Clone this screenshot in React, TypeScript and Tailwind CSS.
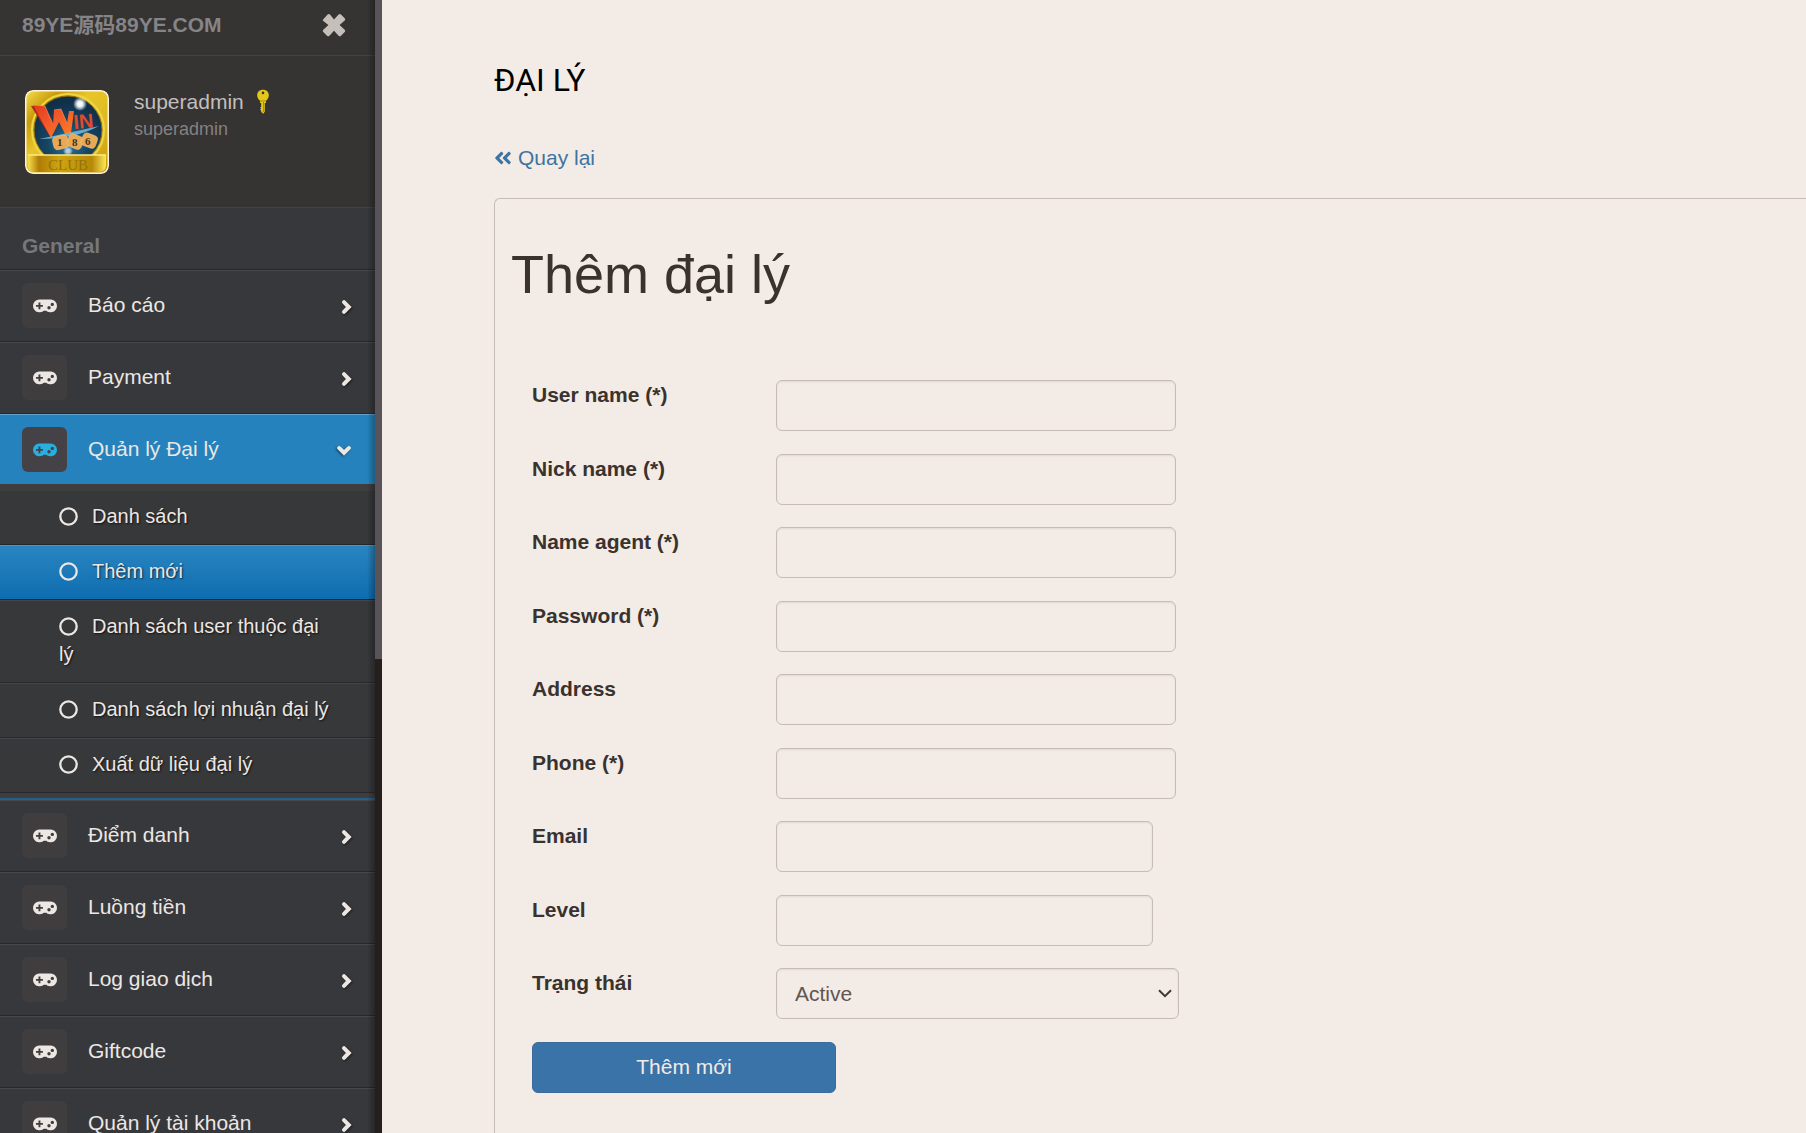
import { useState } from "react";
import clsx from "clsx";
import { FaAngleDoubleLeft } from "react-icons/fa";

type MenuItem = {
  title: string;
  children?: string[];
};

const MENU: MenuItem[] = [
  { title: "Báo cáo" },
  { title: "Payment" },
  {
    title: "Quản lý Đại lý",
    children: [
      "Danh sách",
      "Thêm mới",
      "Danh sách user thuộc đại lý",
      "Danh sách lợi nhuận đại lý",
      "Xuất dữ liệu đại lý",
    ],
  },
  { title: "Điểm danh" },
  { title: "Luồng tiền" },
  { title: "Log giao dịch" },
  { title: "Giftcode" },
  { title: "Quản lý tài khoản" },
];

const FIELDS = [
  { id: "username", label: "User name (*)", type: "text", width: "w-[400px]" },
  { id: "nickname", label: "Nick name (*)", type: "text", width: "w-[400px]" },
  { id: "nameagent", label: "Name agent (*)", type: "text", width: "w-[400px]" },
  { id: "password", label: "Password (*)", type: "password", width: "w-[400px]" },
  { id: "address", label: "Address", type: "text", width: "w-[400px]" },
  { id: "phone", label: "Phone (*)", type: "text", width: "w-[400px]" },
  { id: "email", label: "Email", type: "text", width: "w-[377px]" },
  { id: "level", label: "Level", type: "text", width: "w-[377px]" },
];

const controlStyle =
  "h-[51px] rounded-md border border-[#c5bcb8] bg-transparent px-[18px] text-[21px] text-[#5f5652] shadow-[inset_0_1px_2px_rgba(0,0,0,0.08)] outline-none";

const CloseIcon = () => (
  <svg viewBox="0 0 24 24" className="size-6" fill="currentColor">
    <path d="M1.100 6.500 5.600 1.500q1.200-1.200 2.400 0L12 6.400l4.600-4.900q1.200-1.200 2.400 0l3.700 3.700q1.200 1.200 0 2.400L17.600 12l5.100 4.700q1.200 1.200 0 2.400L19 22.700q-1.200 1.200-2.400 0L12 17.800l-4.600 4.900q-1.200 1.200-2.400 0l-3.700-3.600q-1.200-1.200 0-2.400L6.400 12 1.300 8q-1-.8-.2-1.500z" />
  </svg>
);

const GamepadIcon = () => (
  <svg viewBox="0 0 24 14" className="h-[14px] w-6" fill="currentColor">
    <path
      fillRule="evenodd"
      d="M6.500 .5h11a6.400 6.400 0 1 1-4.200 11.200h-2.600A6.400 6.400 0 1 1 6.500 .5zM5.500 3.400v2.500H3v1.900h2.500v2.500h1.900V7.800h2.500V5.900H7.400V3.400zM16 7.100a1.700 1.700 0 1 0 0 3.400 1.700 1.700 0 0 0 0-3.400zM19.300 3.700a1.700 1.700 0 1 0 0 3.400 1.700 1.700 0 0 0 0-3.400z"
    />
  </svg>
);

const ChevronIcon = ({ open }: { open: boolean }) => (
  <svg
    viewBox="0 0 16 16"
    className={clsx(
      "mt-[3px] size-4 drop-shadow-[1px_1px_1px_rgba(0,0,0,0.5)]",
      open ? "mr-[23px] rotate-90" : "mr-5"
    )}
    fill="none"
    stroke="currentColor"
    strokeWidth="4"
    strokeLinejoin="miter"
    strokeLinecap="round"
  >
    <path d="M5 3.200 9.800 8 5 12.800" />
  </svg>
);

const KeyIcon = () => (
  <svg viewBox="0 0 14 26" className="h-[26px] w-[14px]">
    <path
      fill="#e3c81c"
      fillRule="evenodd"
      d="M7 .8C10.400 .8 12.800 3 12.800 6.200c0 2.400-1.200 4-2.800 5.600v2.200H8.800v8.600L7.400 24.800 5.200 23v-1.400l-1.200-.8 1.200-1.200-1-1 1-1.200V14H4v-2.200C2.400 10.200 1.200 8.600 1.200 6.200 1.200 3 3.600 .8 7 .8zM7 2.600a1.300 1.300 0 1 0 0 2.600 1.300 1.300 0 0 0 0-2.600z"
    />
    <path stroke="#a78d0d" strokeWidth="1" d="M7.500 13v10M4 12h6" />
  </svg>
);

const Avatar = () => (
  <svg viewBox="0 0 84 84" className="size-[84px] rounded-lg">
    <defs>
      <linearGradient id="gold" x1="0" y1="0" x2="1" y2="1">
        <stop offset="0" stopColor="#f3dc4a" />
        <stop offset=".2" stopColor="#c99a0c" />
        <stop offset=".4" stopColor="#e8c62a" />
        <stop offset=".7" stopColor="#dcb820" />
        <stop offset="1" stopColor="#c9980a" />
      </linearGradient>
      <linearGradient id="plate" x1="0" x2="1">
        <stop offset="0" stopColor="#f6e04a" />
        <stop offset=".14" stopColor="#b07c07" />
        <stop offset=".4" stopColor="#cfa40f" />
        <stop offset=".82" stopColor="#b88908" />
        <stop offset="1" stopColor="#fae856" />
      </linearGradient>
      <radialGradient id="night" cx=".5" cy=".7" r=".6">
        <stop offset="0" stopColor="#2a79a8" />
        <stop offset=".5" stopColor="#174563" />
        <stop offset="1" stopColor="#10304a" />
      </radialGradient>
      <radialGradient id="glow">
        <stop offset="0" stopColor="#fff" />
        <stop offset=".4" stopColor="#e7f2f6" />
        <stop offset="1" stopColor="#fff" stopOpacity="0" />
      </radialGradient>
      <linearGradient id="flame" x1="0" y1="0" x2="1" y2="1">
        <stop offset="0" stopColor="#e0391c" />
        <stop offset=".45" stopColor="#f2582a" />
        <stop offset="1" stopColor="#ff8326" />
      </linearGradient>
    </defs>
    <rect width="84" height="84" rx="8" fill="#fdf3dc" />
    <rect x="1.500" y="1.500" width="81" height="81" rx="7" fill="url(#gold)" />
    <circle cx="43" cy="40" r="36" fill="none" stroke="#ecd548" strokeWidth="2" />
    <circle cx="43" cy="40" r="34" fill="url(#night)" stroke="#8f6c09" strokeWidth="1" />
    <circle cx="55" cy="14" r="7" fill="url(#glow)" />
    <path fill="#a82a17" d="M6 16 19 16 29 33 26 48z" />
    <path fill="url(#flame)" d="M8 15 20 16 28 35 29 20 36 19 42 33 44 21 49 21 46 43 40 44 34 32 26 48z" />
    <path fill="none" stroke="#ff9d55" strokeWidth=".6" d="M8 15 20 16 28 35M29 20 36 19 42 33" />
    <text
      x="49"
      y="39"
      fontSize="20"
      fontWeight="700"
      fill="#e5482a"
      fontFamily="Liberation Sans, sans-serif"
      transform="rotate(-5 49 39)"
    >
      IN
    </text>
    <path d="M14 49Q44 43 74 36Q50 49 14 49z" fill="#8bd2f0" opacity=".7" />
    <g fill="#e8a854" stroke="#f2c787" strokeWidth=".6">
      <rect x="28" y="46" width="15" height="13" rx="4" transform="rotate(-14 35 52)" />
      <rect x="43" y="45" width="15" height="13" rx="4" transform="rotate(22 50 51)" />
      <rect x="57" y="44" width="15" height="13" rx="4" transform="rotate(20 64 50)" />
    </g>
    <g fontSize="11" fontWeight="700" fill="#42301c" fontFamily="Liberation Serif, serif">
      <text x="32" y="56">1</text>
      <text x="47" y="56">8</text>
      <text x="60" y="55">6</text>
    </g>
    <circle cx="43" cy="61" r="5" fill="url(#glow)" opacity=".7" />
    <path d="M3 65h78v10q0 7-7 7H10q-7 0-7-7z" fill="url(#plate)" />
    <path d="M3 65h78" stroke="#fbea86" strokeWidth="1.500" />
    <text
      x="43"
      y="80"
      fontSize="15"
      textAnchor="middle"
      fill="#94730a"
      fontFamily="Liberation Serif, serif"
    >
      CLUB
    </text>
  </svg>
);

const SubMenu = ({ items, active }: { items: string[]; active: string }) => (
  <ul className="border-b-2 border-[#265f8a] bg-[#403d3f] pt-[7px] pb-[5px]">
    {items.map((item) => (
      <li key={item}>
        <a
          href="#"
          className={clsx(
            "block border-b pt-[11px] pr-10 pb-[14px] pl-[59px] text-[20px] leading-7",
            item === active
              ? "border-t border-t-[#4d96c4] border-b-[#212428] bg-linear-to-b from-[#2985c0] to-[#0d6db0]"
              : "border-t border-t-[#454649] border-b-[#27282a] bg-[#37383a]",
            item === items[0] && "border-t-0"
          )}
        >
          <svg
            viewBox="0 0 19 19"
            className="mr-[14px] inline size-[19px] align-[-3px]"
            fill="none"
            stroke="currentColor"
            strokeWidth="2.300"
          >
            <circle cx="9.500" cy="9.500" r="8.200" />
          </svg>
          {item}
        </a>
      </li>
    ))}
  </ul>
);

const Sidebar = () => {
  const [opened, setOpened] = useState("Quản lý Đại lý");

  return (
    <aside className="flex h-full w-[382px] shrink-0 overflow-hidden bg-[#261f1d]">
      <div className="relative w-[375px] shrink-0 bg-[#37383b]">
        <div className="bg-[#363333]">
          <div className="flex items-start justify-between border-b border-[#434244] pt-[10px] pr-[29px] pb-[15px] pl-[22px]">
            <a href="#" className="text-[21px] leading-[30px] font-bold text-[#858487]">
              89YE源码89YE.COM
            </a>
            <button type="button" aria-label="Close" className="flex h-[30px] items-center text-[#c6bfb9]">
              <CloseIcon />
            </button>
          </div>
          <div className="flex gap-[25px] border-b border-[#434244] pt-[34px] pb-[33px] pl-[25px]">
            <Avatar />
            <div className="flex flex-col">
              <div className="flex h-6 items-center gap-3 text-[21px] text-[#c1bfbe]">
                superadmin
                <KeyIcon />
              </div>
              <span className="pt-[3px] text-[18px] leading-6 text-[#838182]">superadmin</span>
            </div>
          </div>
        </div>
        <h3 className="border-b border-[#27282a] pt-[23px] pb-2 pl-[22px] text-[21px] leading-[30px] font-bold text-[#76777b]">
          General
        </h3>
        <nav className="text-[#ece7e3] [text-shadow:1px_1px_2px_rgba(0,0,0,0.7)]">
          {MENU.map((item) => {
            const open = item.title === opened;
            return (
              <div key={item.title}>
                <button
                  type="button"
                  onClick={() => setOpened(open ? "" : item.title)}
                  className={clsx(
                    "flex w-full items-center border-t py-3 pl-[22px] text-left text-[21px] leading-[30px]",
                    open
                      ? "border-[#5fa3cd] bg-[#2582bc]"
                      : "border-b border-t-[#48494b] border-b-[#27282a] pb-[13px]"
                  )}
                >
                  <span
                    className={clsx(
                      "mr-[21px] flex size-[45px] items-center justify-center rounded-md",
                      open ? "bg-[#444247] text-[#27afe0]" : "bg-[#403d3f]"
                    )}
                  >
                    <GamepadIcon />
                  </span>
                  <span className="flex-1 pb-[2px]">{item.title}</span>
                  <ChevronIcon open={open} />
                </button>
                {open && item.children && <SubMenu items={item.children} active="Thêm mới" />}
              </div>
            );
          })}
        </nav>
        {/* inner shadow at the right edge */}
        <div className="pointer-events-none absolute inset-y-0 right-0 w-2 bg-linear-to-r from-transparent to-black/30" />
      </div>
      {/* scrollbar thumb */}
      <div className="h-[659px] flex-1 bg-[#59545a]" />
    </aside>
  );
};

const AgentForm = () => (
  <form className="px-[37px]" onSubmit={(e) => e.preventDefault()}>
    {FIELDS.map((field) => (
      <div key={field.id} className="flex items-start odd:mb-[23px] even:mb-[22px]">
        <label htmlFor={field.id} className="w-[244px] leading-[30px] font-bold">
          {field.label}
        </label>
        <input id={field.id} type={field.type} className={clsx(controlStyle, field.width)} />
      </div>
    ))}
    <div className="mb-[23px] flex items-start">
      <label htmlFor="status" className="w-[244px] leading-[30px] font-bold">
        Trạng thái
      </label>
      <div className="relative">
        <select id="status" className={clsx(controlStyle, "w-[403px] appearance-none")}>
          <option>Active</option>
          <option>Inactive</option>
        </select>
        <svg
          viewBox="0 0 14 9"
          className="pointer-events-none absolute top-[21px] right-[7px] h-[9px] w-[14px]"
          fill="none"
          stroke="#3f3833"
          strokeWidth="2"
        >
          <path d="M1 1.200 7 7.200 13 1.200" />
        </svg>
      </div>
    </div>
    <button
      type="submit"
      className="h-[51px] w-[304px] rounded-md border border-[#3a6b9b] bg-[#3a73a8] pb-[2px] text-[#f3ebe5]"
    >
      Thêm mới
    </button>
  </form>
);

const App = () => {
  return (
    <div className="flex h-screen overflow-hidden bg-[#f3ebe5] font-['Liberation_Sans','Noto_Sans_CJK_SC',sans-serif] text-[21px] text-[#3a322d]">
      <Sidebar />
      <main className="flex flex-1 flex-col pt-[60px] pl-28">
        <h2 className="font-[Roboto,sans-serif] text-[32px] leading-10 font-normal text-black">ĐẠI LÝ</h2>
        <a href="#" className="mt-[43px] flex items-center gap-[6px] self-start leading-[30px] text-[#3d73a3]">
          <FaAngleDoubleLeft className="h-5 w-[18px]" />
          Quay lại
        </a>
        <section className="mt-[25px] flex-1 rounded-tl-md border-t border-l border-[#c5bcb8]">
          <h1 className="mt-[45px] mb-[76px] pl-4 text-[54px] leading-[60px]">Thêm đại lý</h1>
          <AgentForm />
        </section>
      </main>
    </div>
  );
};

export default App;
